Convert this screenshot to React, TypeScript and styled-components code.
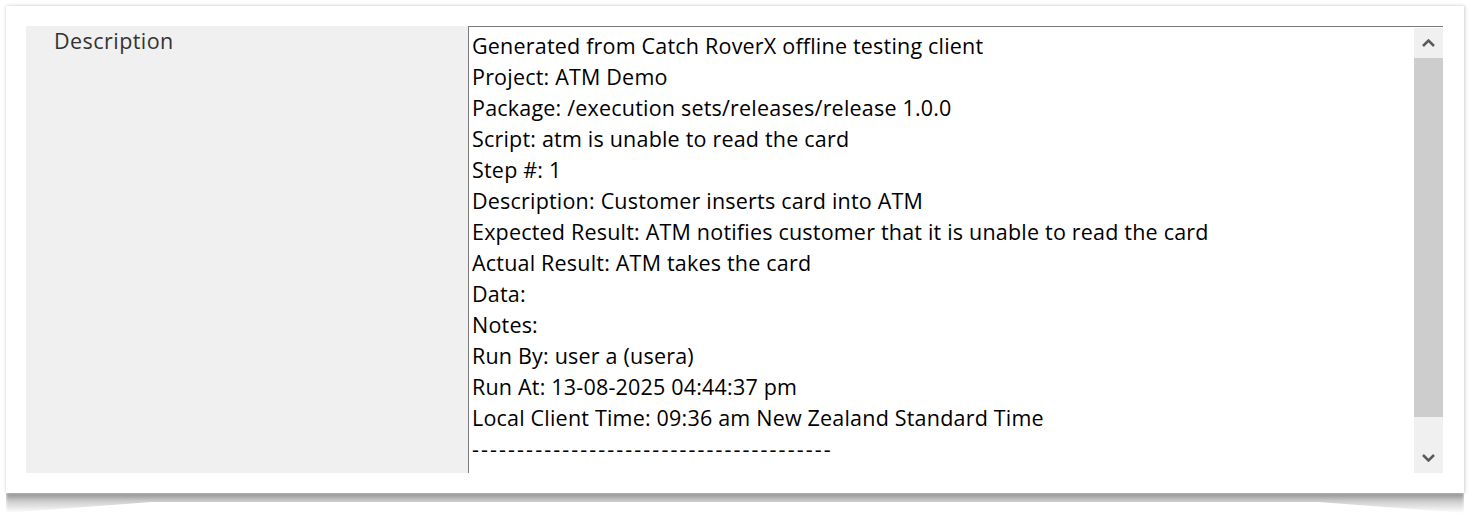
import React from 'react';
import styled, { createGlobalStyle } from 'styled-components';

const GlobalStyle = createGlobalStyle`
    html {
        background: #ffffff;
    }

    body {
        margin: 0;
        padding: 0;
        font-family: 'Open Sans', 'Noto Sans', sans-serif;
    }
`;

const Page = styled.div`
    padding: 6px 0 0 6px;
    width: 1478px;
    height: 522px;
    box-sizing: border-box;
`;

const Card = styled.div`
    position: relative;
    isolation: isolate;
    width: 1458px;
    height: 487px;
    box-sizing: border-box;
    padding: 20px 21px 20px 20px;
    background: #ffffff;
    box-shadow: 0 0 3px rgba(0, 0, 0, 0.18), 2px 0 4px rgba(0, 0, 0, 0.08);

    &::after {
        content: '';
        position: absolute;
        left: 0;
        right: 0;
        top: 100%;
        height: 20px;
        background: linear-gradient(
            to bottom,
            rgba(0, 0, 0, 0.45),
            rgba(0, 0, 0, 0.2) 40%,
            rgba(0, 0, 0, 0)
        );
        clip-path: polygon(0 0, 100% 0, 100% 100%, 90% 45%, 10% 45%, 0 100%);
        filter: blur(1.5px);
        z-index: -1;
    }
`;

const FieldRow = styled.div`
    display: grid;
    grid-template-columns: 442px 1fr;
    height: 100%;
    overflow: hidden;
`;

const Label = styled.div`
    background: #f0f0f0;
    color: #333333;
    font-size: 21.5px;
    letter-spacing: 0.45px;
    line-height: 28px;
    padding: 1px 0 0 28px;
`;

const TextBox = styled.div`
    display: flex;
    border-top: 1px solid #7a7a7a;
    border-left: 1px solid #7a7a7a;
    background: #ffffff;
    overflow: hidden;
`;

const Content = styled.div`
    flex: 1;
    padding: 3px 0 0 3px;
    color: #000000;
    font-size: 21.5px;
    line-height: 31px;
    letter-spacing: 0.2px;
    white-space: pre;
    overflow: hidden;
`;

const Line = styled.div`
    height: 31px;
`;

const DashLine = styled(Line)`
    letter-spacing: 2.1px;
`;

const Scrollbar = styled.div`
    display: flex;
    flex-direction: column;
    width: 29px;
    margin-top: 1px;
    background: #f0f0f0;
`;

const ArrowButton = styled.div`
    height: 30px;
    display: flex;
    align-items: center;
    justify-content: center;
    flex-shrink: 0;
`;

const Thumb = styled.div<{ $size: number }>`
    height: ${(p) => p.$size}px;
    background: #cdcdcd;
    flex-shrink: 0;
`;

const Track = styled.div`
    flex: 1;
`;

const Chevron = ({ up }: { up?: boolean }) => (
    <svg width="13" height="8" viewBox="0 0 13 8">
        <path
            d={up ? 'M1 7 L6.5 1.5 L12 7' : 'M1 1 L6.5 6.5 L12 1'}
            fill="none"
            stroke="#5a5a5a"
            strokeWidth="2.5"
        />
    </svg>
);

const lines = [
    'Generated from Catch RoverX offline testing client',
    'Project: ATM Demo',
    'Package: /execution sets/releases/release 1.0.0',
    'Script: atm is unable to read the card',
    'Step #: 1',
    'Description: Customer inserts card into ATM',
    'Expected Result: ATM notifies customer that it is unable to read the card',
    'Actual Result: ATM takes the card',
    'Data:',
    'Notes:',
    'Run By: user a (usera)',
    'Run At: 13-08-2025 04:44:37 pm',
    'Local Client Time: 09:36 am New Zealand Standard Time',
];

const App = () => {
    return (
        <Page>
            <GlobalStyle />
            <Card>
                <FieldRow>
                    <Label>Description</Label>
                    <TextBox>
                        <Content>
                            {lines.map((line) => (
                                <Line key={line}>{line}</Line>
                            ))}
                            <DashLine>{'-'.repeat(40)}</DashLine>
                        </Content>
                        <Scrollbar>
                            <ArrowButton>
                                <Chevron up />
                            </ArrowButton>
                            <Thumb $size={359} />
                            <Track />
                            <ArrowButton>
                                <Chevron />
                            </ArrowButton>
                        </Scrollbar>
                    </TextBox>
                </FieldRow>
            </Card>
        </Page>
    );
};

export default App;
